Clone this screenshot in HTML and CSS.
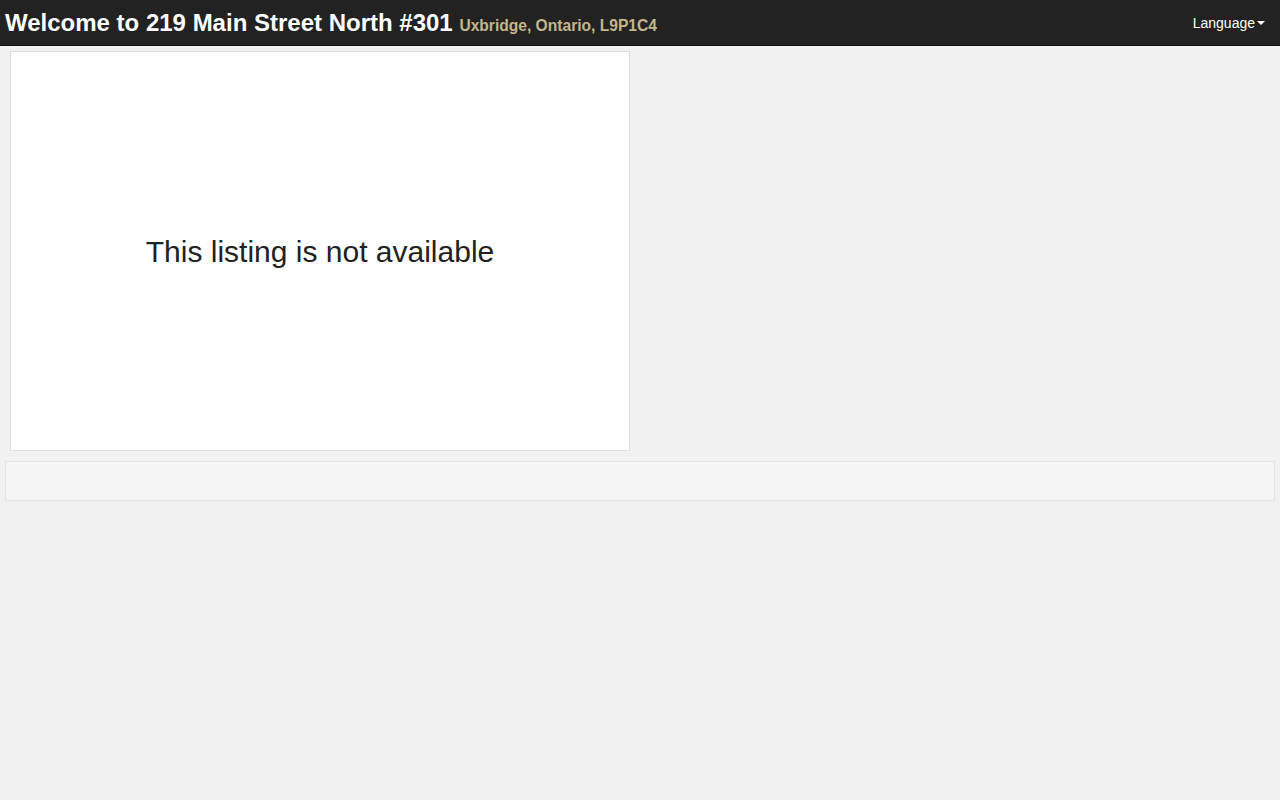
FILE: index.html
```html
<!DOCTYPE html>
<html>
<head>
<meta charset="utf-8">
<link rel="stylesheet" href="styles.css">
</head>
<body>
<header class="navbar">
  <h1 class="title">Welcome to 219 Main Street North #301 <small class="subtitle">Uxbridge, Ontario, L9P1C4</small></h1>
  <div class="lang">Language<span class="caret"></span></div>
</header>
<main class="content">
  <div class="row">
    <div class="card"><p class="msg">This listing is not available</p></div>
  </div>
  <div class="well"></div>
</main>
</body>
</html>
```
FILE: styles.css
```css
* { box-sizing: border-box; }
html, body { margin: 0; padding: 0; }
body {
  background: #f1f1f1;
  font-family: "Liberation Sans", Arial, sans-serif;
  color: #222;
  font-size: 14px;
}
.navbar {
  height: 46px;
  background: #222;
  border-bottom: 1px solid #101010;
  display: flex;
  align-items: center;
  justify-content: space-between;
  padding: 0 15px 0 5px;
}
.title {
  margin: 0;
  font-size: 24px;
  font-weight: bold;
  color: #fff;
  line-height: 1;
  padding-top: 1px;
}
.subtitle {
  font-size: 15.6px;
  color: #c4b68c;
  font-weight: bold;
}
.lang {
  color: #fff;
  font-size: 14px;
  display: flex;
  align-items: center;
}
.caret {
  display: inline-block;
  width: 0; height: 0;
  margin-left: 2px;
  border-top: 4px solid #fff;
  border-left: 4px solid transparent;
  border-right: 4px solid transparent;
}
.content { padding: 5px; }
.row { padding: 0 5px; }
.card {
  width: 620px;
  height: 400px;
  background: #fff;
  border: 1px solid #ddd;
  display: flex;
  align-items: center;
  justify-content: center;
}
.msg {
  margin: 0;
  padding-top: 2px;
  font-size: 30px;
  color: #222;
}
.well {
  margin-top: 10px;
  height: 40px;
  background: #f5f5f5;
  border: 1px solid #e3e3e3;
  border-radius: 1px;
}
```
